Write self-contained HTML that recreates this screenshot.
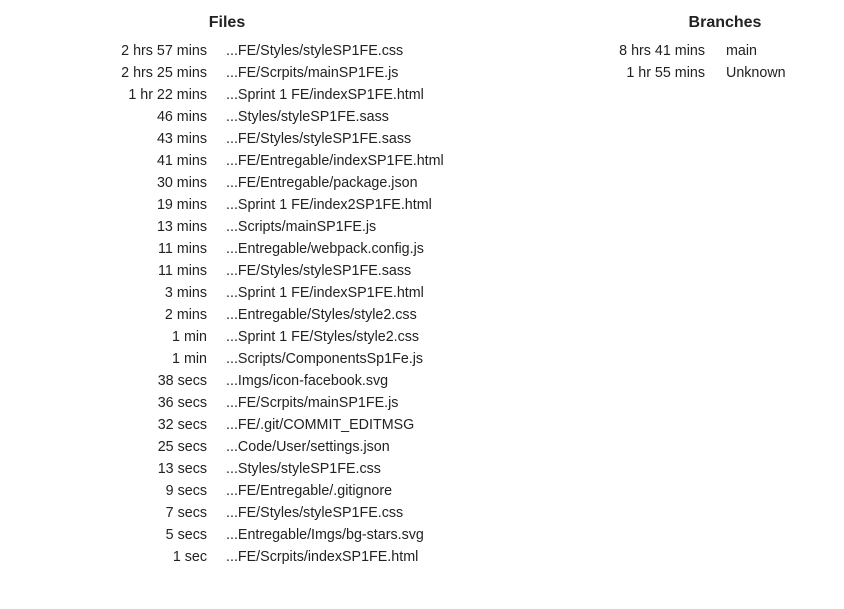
<!DOCTYPE html>
<html><head><style>
body{margin:0;width:844px;height:609px;background:#fff;font-family:"Liberation Sans",sans-serif;color:#222;font-size:14.3px;position:relative;overflow:hidden}
h3{position:absolute;margin:0;font-size:16px;font-weight:bold;line-height:22px;top:12px;width:200px;text-align:center}
.t{position:absolute;right:637px;text-align:right;white-space:nowrap;line-height:22px}
.f{position:absolute;left:226px;white-space:nowrap;line-height:22px}
</style></head><body>
<h3 style="left:127px">Files</h3>
<h3 style="left:625px">Branches</h3>
<div class="t" style="top:40px">2 hrs 57 mins<br>2 hrs 25 mins<br>1 hr 22 mins<br>46 mins<br>43 mins<br>41 mins<br>30 mins<br>19 mins<br>13 mins<br>11 mins<br>11 mins<br>3 mins<br>2 mins<br>1 min<br>1 min<br>38 secs<br>36 secs<br>32 secs<br>25 secs<br>13 secs<br>9 secs<br>7 secs<br>5 secs<br>1 sec</div>
<div class="f" style="top:40px">...FE/Styles/styleSP1FE.css<br>...FE/Scrpits/mainSP1FE.js<br>...Sprint 1 FE/indexSP1FE.html<br>...Styles/styleSP1FE.sass<br>...FE/Styles/styleSP1FE.sass<br>...FE/Entregable/indexSP1FE.html<br>...FE/Entregable/package.json<br>...Sprint 1 FE/index2SP1FE.html<br>...Scripts/mainSP1FE.js<br>...Entregable/webpack.config.js<br>...FE/Styles/styleSP1FE.sass<br>...Sprint 1 FE/indexSP1FE.html<br>...Entregable/Styles/style2.css<br>...Sprint 1 FE/Styles/style2.css<br>...Scripts/ComponentsSp1Fe.js<br>...Imgs/icon-facebook.svg<br>...FE/Scrpits/mainSP1FE.js<br>...FE/.git/COMMIT_EDITMSG<br>...Code/User/settings.json<br>...Styles/styleSP1FE.css<br>...FE/Entregable/.gitignore<br>...FE/Styles/styleSP1FE.css<br>...Entregable/Imgs/bg-stars.svg<br>...FE/Scrpits/indexSP1FE.html</div>
<div class="t" style="top:40px;right:139px">8 hrs 41 mins<br>1 hr 55 mins</div>
<div class="f" style="top:40px;left:726px">main<br>Unknown</div>
</body></html>
